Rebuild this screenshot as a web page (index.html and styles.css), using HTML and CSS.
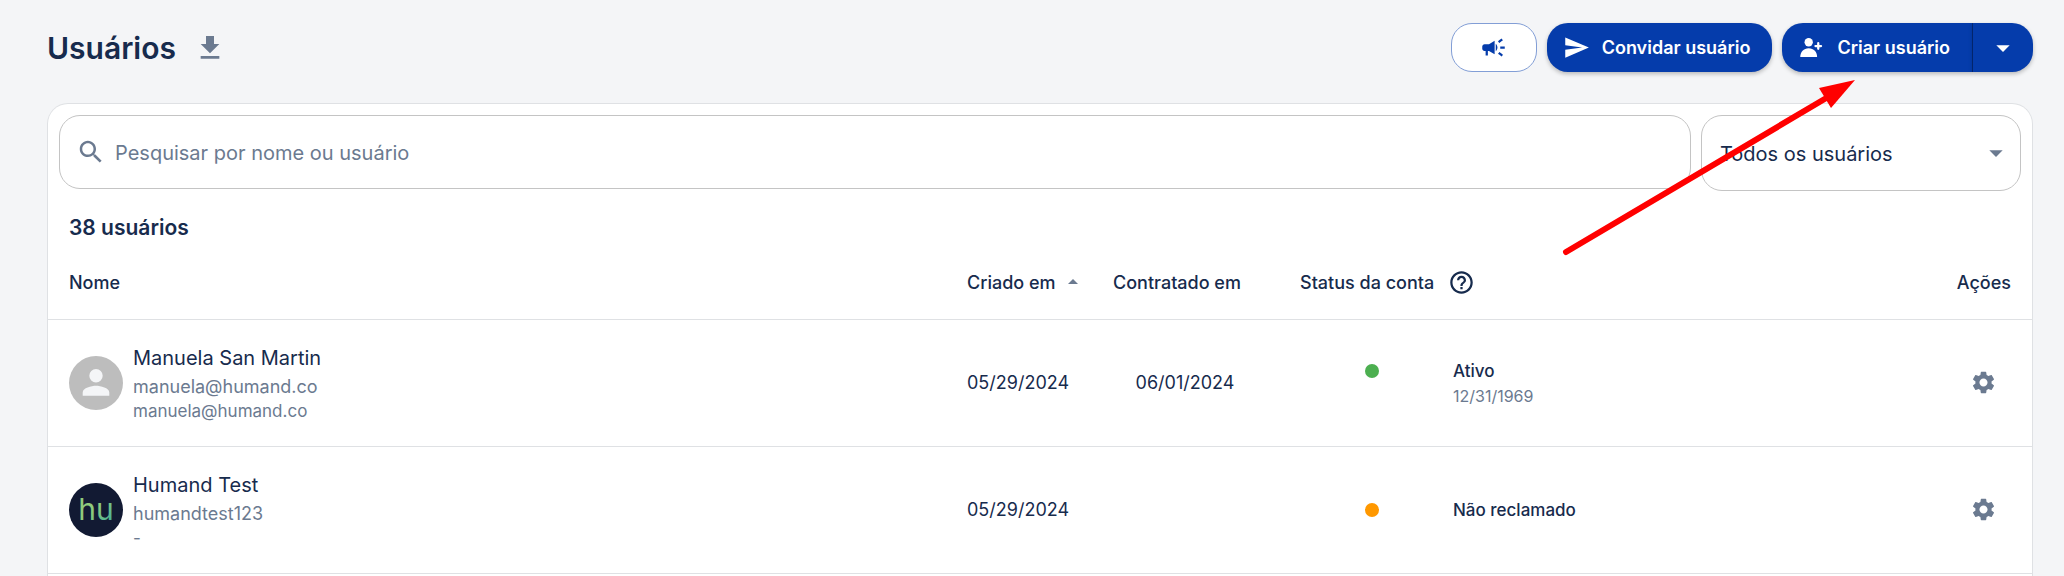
FILE: index.html
```html
<!DOCTYPE html>
<html lang="pt-BR">
<head>
    <meta charset="UTF-8">
    <meta name="viewport" content="width=device-width, initial-scale=1">
    <title>Usuários</title>
    <link rel="stylesheet" href="styles.css">
</head>
<body>
    <main class="page">
        <header class="topbar">
            <h1>Usuários</h1>
            <button class="icon-btn" aria-label="Baixar">
                <svg class="icon icon-lg" viewBox="0 0 24 24"><path d="M19 9h-4V3H9v6H5l7 7 7-7zM5 18v2h14v-2H5z"/></svg>
            </button>
            <div class="actions">
                <button class="btn btn-outline" aria-label="Anunciar">
                    <svg class="icon" viewBox="0 0 24 24"><path d="M18 11v2h4v-2h-4zm-2 6.61c.96.71 2.21 1.65 3.2 2.39.4-.53.8-1.07 1.2-1.6-.99-.74-2.24-1.68-3.2-2.4-.4.54-.8 1.08-1.2 1.61zM20.4 5.6c-.4-.53-.8-1.07-1.2-1.6-.99.74-2.24 1.68-3.2 2.4.4.53.8 1.07 1.2 1.6.96-.72 2.21-1.65 3.2-2.4zM4 9c-1.1 0-2 .9-2 2v2c0 1.1.9 2 2 2h1v4h2v-4h1l5 3V6L8 9H4zm11.5 3c0-1.33-.58-2.53-1.5-3.35v6.69c.92-.81 1.5-2.01 1.5-3.34z"/></svg>
                </button>
                <button class="btn btn-primary">
                    <svg class="icon" viewBox="0 0 24 24"><path d="M2.01 21 23 12 2.01 3 2 10l15 2-15 2z"/></svg>
                    Convidar usuário
                </button>
                <div class="split">
                    <button class="btn btn-primary split-main">
                        <svg class="icon" viewBox="0 0 24 24"><circle cx="9.5" cy="7.3" r="3.7"/><path d="M2 20.500c0-4.500 3-7.800 7.500-7.800s7.500 3.300 7.500 7.800z"/><path class="plus" d="M18 8.200v5M15.500 10.700h5"/></svg>
                        Criar usuário
                    </button>
                    <button class="btn btn-primary split-toggle" aria-label="Mais opções">
                        <svg class="icon icon-lg" viewBox="0 0 24 24"><path d="m7 10 5 5 5-5z"/></svg>
                    </button>
                </div>
            </div>
        </header>

        <section class="card">
            <div class="filters">
                <label class="search">
                    <svg class="icon icon-md" viewBox="0 0 24 24"><path d="M15.500 14h-.79l-.28-.27C15.410 12.590 16 11.110 16 9.500 16 5.910 13.090 3 9.500 3S3 5.910 3 9.500 5.910 16 9.500 16c1.610 0 3.090-.59 4.230-1.570l.27.28v.79l5 4.990L20.490 19l-4.990-5zm-6 0C7.010 14 5 11.990 5 9.500S7.010 5 9.500 5 14 7.010 14 9.500 11.990 14 9.500 14z"/></svg>
                    <input type="text" placeholder="Pesquisar por nome ou usuário" aria-label="Pesquisar por nome ou usuário">
                </label>
                <div class="select">
                    <select aria-label="Filtrar usuários">
                        <option>Todos os usuários</option>
                    </select>
                    <svg class="icon icon-lg" viewBox="0 0 24 24"><path d="m7 10 5 5 5-5z"/></svg>
                </div>
            </div>

            <h2>38 usuários</h2>

            <table>
                <thead>
                    <tr>
                        <th>Nome</th>
                        <th class="col-created">
                            <span class="th-label">Criado em
                                <svg class="icon icon-sm sort" viewBox="0 0 24 24"><path d="m7 14 5-5 5 5z"/></svg>
                            </span>
                        </th>
                        <th class="col-hired">Contratado em</th>
                        <th class="col-status">
                            <span class="th-label th-status">Status da conta
                                <svg class="icon" viewBox="0 0 24 24"><path d="M11 18h2v-2h-2v2zm1-16C6.480 2 2 6.480 2 12s4.480 10 10 10 10-4.480 10-10S17.520 2 12 2zm0 18c-4.410 0-8-3.590-8-8s3.590-8 8-8 8 3.590 8 8-3.590 8-8 8zm0-14c-2.210 0-4 1.790-4 4h2c0-1.100.9-2 2-2s2 .9 2 2c0 2-3 1.750-3 5h2c0-2.250 3-2.500 3-5 0-2.210-1.790-4-4-4z"/></svg>
                            </span>
                        </th>
                        <th class="col-actions">Ações</th>
                    </tr>
                </thead>
                <tbody>
                    <tr>
                        <td>
                            <div class="user">
                                <svg class="avatar" viewBox="0 0 54 54"><circle cx="27" cy="27" r="27" fill="#bdbdbd"/><path fill="#f4f5f7" d="M27 26.500a6.700 6.700 0 1 0 0-13.400 6.700 6.700 0 0 0 0 13.400zm0 3.300c-4.500 0-13.300 2.200-13.300 6.700v3.300h26.600v-3.300c0-4.500-8.800-6.700-13.300-6.700z"/></svg>
                                <div>
                                    <div class="user-name">Manuela San Martin</div>
                                    <div class="user-login">manuela@humand.co</div>
                                    <div class="user-mail">manuela@humand.co</div>
                                </div>
                            </div>
                        </td>
                        <td class="col-created">05/29/2024</td>
                        <td class="col-hired">06/01/2024</td>
                        <td>
                            <div class="status">
                                <span class="dot dot-active"></span>
                                <div>
                                    <div class="status-label">Ativo</div>
                                    <div class="status-date">12/31/1969</div>
                                </div>
                            </div>
                        </td>
                        <td class="col-actions">
                            <button class="icon-btn gear" aria-label="Configurar Manuela San Martin">
                                <svg class="icon" viewBox="0 0 24 24"><path d="M19.140 12.940c.04-.3.06-.61.06-.94 0-.32-.02-.64-.07-.94l2.030-1.580c.18-.14.23-.41.12-.61l-1.920-3.320c-.12-.22-.37-.29-.59-.22l-2.390.96c-.5-.38-1.030-.7-1.620-.94l-.36-2.540c-.04-.24-.24-.41-.48-.41h-3.840c-.24 0-.43.17-.47.41l-.36 2.540c-.59.24-1.130.57-1.620.94l-2.390-.96c-.22-.08-.47 0-.59.22L2.740 8.870c-.12.21-.08.47.12.61l2.030 1.580c-.05.3-.09.63-.09.94s.02.64.07.94l-2.030 1.580c-.18.14-.23.41-.12.61l1.920 3.320c.12.22.37.29.59.22l2.390-.96c.5.38 1.030.7 1.620.94l.36 2.540c.05.24.24.41.48.41h3.840c.24 0 .44-.17.47-.41l.36-2.540c.59-.24 1.130-.56 1.620-.94l2.390.96c.22.08.47 0 .59-.22l1.920-3.320c.12-.22.07-.47-.12-.61l-2.010-1.580zM12 15.600c-1.980 0-3.600-1.620-3.600-3.600s1.620-3.600 3.600-3.600 3.600 1.620 3.600 3.600-1.620 3.600-3.600 3.600z"/></svg>
                            </button>
                        </td>
                    </tr>
                    <tr>
                        <td>
                            <div class="user">
                                <svg class="avatar" viewBox="0 0 54 54">
                                    <defs>
                                        <linearGradient id="hu" x1="0" y1="0" x2="1" y2="1">
                                            <stop offset="0.5" stop-color="#8fcb7c"/>
                                            <stop offset="1" stop-color="#2fa8a0"/>
                                        </linearGradient>
                                    </defs>
                                    <circle cx="27" cy="27" r="27" fill="#121a33"/>
                                    <text class="logo" x="27" y="37" fill="url(#hu)">hu</text>
                                </svg>
                                <div>
                                    <div class="user-name">Humand Test</div>
                                    <div class="user-login">humandtest123</div>
                                    <div class="user-mail">-</div>
                                </div>
                            </div>
                        </td>
                        <td class="col-created">05/29/2024</td>
                        <td class="col-hired"></td>
                        <td>
                            <div class="status">
                                <span class="dot dot-pending"></span>
                                <div class="status-label">Não reclamado</div>
                            </div>
                        </td>
                        <td class="col-actions">
                            <button class="icon-btn gear" aria-label="Configurar Humand Test">
                                <svg class="icon" viewBox="0 0 24 24"><path d="M19.140 12.940c.04-.3.06-.61.06-.94 0-.32-.02-.64-.07-.94l2.030-1.580c.18-.14.23-.41.12-.61l-1.920-3.320c-.12-.22-.37-.29-.59-.22l-2.390.96c-.5-.38-1.030-.7-1.620-.94l-.36-2.540c-.04-.24-.24-.41-.48-.41h-3.840c-.24 0-.43.17-.47.41l-.36 2.540c-.59.24-1.130.57-1.620.94l-2.390-.96c-.22-.08-.47 0-.59.22L2.740 8.870c-.12.21-.08.47.12.61l2.030 1.580c-.05.3-.09.63-.09.94s.02.64.07.94l-2.030 1.580c-.18.14-.23.41-.12.61l1.920 3.320c.12.22.37.29.59.22l2.390-.96c.5.38 1.030.7 1.620.94l.36 2.540c.05.24.24.41.48.41h3.840c.24 0 .44-.17.47-.41l.36-2.540c.59-.24 1.130-.56 1.620-.94l2.390.96c.22.08.47 0 .59-.22l1.920-3.320c.12-.22.07-.47-.12-.61l-2.010-1.580zM12 15.600c-1.980 0-3.600-1.620-3.600-3.600s1.620-3.600 3.600-3.600 3.600 1.620 3.600 3.600-1.620 3.600-3.600 3.600z"/></svg>
                            </button>
                        </td>
                    </tr>
                </tbody>
            </table>
        </section>

        <!-- arrow pointing at "Criar usuário" -->
        <svg class="pointer" viewBox="0 0 300 180">
            <path d="M6 173 268 18" stroke="#f00" stroke-width="6" stroke-linecap="round"/>
            <path d="M295 1 259 9l12 20z" fill="#f00"/>
        </svg>
    </main>
</body>
</html>
```
FILE: styles.css
```css
* {
    box-sizing: border-box;
}

body {
    margin: 0;
    background-color: #f4f5f7;
    color: #172b4d;
    font-family: Inter, "Liberation Sans", sans-serif;
    font-size: 18px;
}

button,
input,
select {
    font: inherit;
    color: inherit;
}

button {
    cursor: pointer;
}

.page {
    position: relative;
    display: flex;
    flex-direction: column;
    height: 100vh;
    overflow: hidden;
    padding: 23px 31px 0 47px;
}

/* icons */
.icon {
    display: block;
    flex: none;
    width: 27px;
    height: 27px;
    fill: currentColor;
}

.icon-sm {
    width: 24px;
    height: 24px;
}

.icon-md {
    width: 30px;
    height: 30px;
}

.icon-lg {
    width: 32px;
    height: 32px;
}

.icon-btn {
    display: block;
    padding: 0;
    border: 0;
    background: none;
    color: #6b7a90;
}

.plus {
    fill: none;
    stroke: currentColor;
    stroke-width: 2;
    stroke-linecap: round;
}

/* header */
.topbar {
    display: flex;
    align-items: center;
    gap: 18px;
    height: 49px;
    margin-bottom: 31px;
}

h1 {
    margin: 0;
    font-size: 30px;
    font-weight: 600;
}

.actions {
    display: flex;
    gap: 10px;
    margin-left: auto;
}

.btn {
    display: flex;
    align-items: center;
    justify-content: center;
    gap: 12px;
    height: 49px;
    border: 0;
    border-radius: 21px;
    font-weight: 600;
}

.btn-outline {
    width: 86px;
    border: 1px solid #829ed6;
    background-color: #fff;
    color: #053cab;
}

.btn-primary {
    padding: 0 22px 0 16px;
    background-color: #053cab;
    color: #fff;
    box-shadow: 0 2px 4px rgba(0, 0, 0, 0.25);
}

.split {
    display: flex;
}

.split-main {
    border-right: 1px solid #042a78;
    border-radius: 21px 0 0 21px;
}

.split-toggle {
    width: 60px;
    padding: 0;
    border-radius: 0 21px 21px 0;
}

/* card */
.card {
    flex: 1;
    border: 1px solid #dfe1e4;
    border-bottom: 0;
    border-radius: 21px 21px 0 0;
    background-color: #fff;
}

.filters {
    display: flex;
    align-items: flex-start;
    gap: 10px;
    padding: 11px;
}

.search,
.select {
    display: flex;
    align-items: center;
    border: 1px solid #c4c4c4;
    border-radius: 21px;
}

.search {
    flex: 1;
    gap: 9px;
    height: 74px;
    padding: 0 16px;
}

.search .icon {
    color: #6b7a90;
}

.search input {
    flex: 1;
    padding: 2px 0 0;
    border: 0;
    outline: 0;
    background: none;
    font-size: 20px;
}

.search input::placeholder {
    color: #6b7a90;
    opacity: 1;
}

.select {
    position: relative;
    width: 320px;
    height: 76px;
}

.select select {
    appearance: none;
    width: 100%;
    height: 100%;
    padding: 2px 48px 0 18px;
    border: 0;
    border-radius: 21px;
    background: none;
    font-size: 20px;
}

.select .icon {
    position: absolute;
    right: 8px;
    color: #6b7a90;
    pointer-events: none;
}

h2 {
    margin: 12px 21px 4px;
    font-size: 21px;
    line-height: 28px;
    font-weight: 600;
}

/* table */
table {
    width: 100%;
    table-layout: fixed;
    border-collapse: collapse;
}

th,
td {
    padding: 0 21px;
    border-bottom: 1px solid #dfe1e4;
    text-align: left;
}

th {
    height: 73px;
    font-weight: 500;
}

td {
    height: 127px;
}

.col-created {
    width: 146px;
    padding: 0 0 0 16px;
    white-space: nowrap;
}

.th-label {
    display: flex;
    align-items: center;
    gap: 5px;
}

.sort {
    color: #6b7a90;
}

.col-hired {
    width: 176px;
    padding: 0;
    text-align: center;
}

th.col-hired {
    padding-left: 16px;
    text-align: left;
}

.col-status {
    width: 500px;
    padding-left: 27px;
}

.th-status {
    gap: 14px;
}

.col-actions {
    width: 259px;
    text-align: right;
}

.gear {
    margin: 0 14px 0 auto;
}

.user {
    display: flex;
    align-items: center;
    gap: 10px;
}

.avatar {
    flex: none;
    width: 54px;
    height: 54px;
}

.logo {
    font-size: 30px;
    font-weight: 400;
    text-anchor: middle;
}

.user-name {
    font-size: 20px;
    line-height: 32px;
}

.user-login {
    line-height: 26px;
    color: #6b7a90;
}

.user-mail {
    font-size: 17px;
    line-height: 23px;
    color: #6b7a90;
}

.status {
    display: flex;
    align-items: flex-start;
    gap: 74px;
    padding-left: 71px;
}

.dot {
    width: 14px;
    height: 14px;
    margin-top: 6px;
    border-radius: 50%;
}

.dot-active {
    background-color: #4caf50;
}

.dot-pending {
    background-color: #ff9800;
}

.status-label {
    font-size: 17px;
    line-height: 26px;
    font-weight: 500;
}

.status-date {
    font-size: 16px;
    line-height: 24px;
    color: #6b7a90;
}

.pointer {
    position: absolute;
    top: 79px;
    right: 204px;
    width: 300px;
    height: 180px;
    pointer-events: none;
}
```
